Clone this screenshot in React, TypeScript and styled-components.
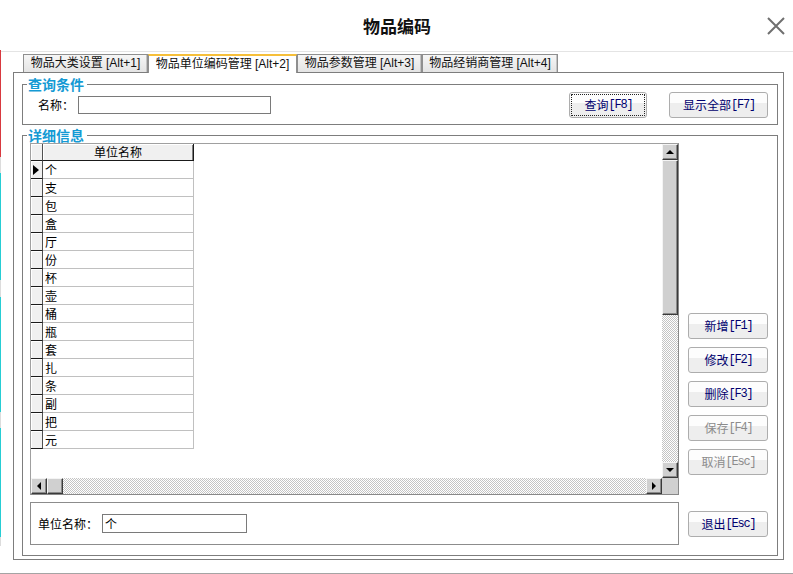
import * as React from 'react';
import styled, { createGlobalStyle } from 'styled-components';

const cjk = `"Noto Sans CJK SC", "Liberation Sans", sans-serif`;
const latin = `"Liberation Sans", "Noto Sans CJK SC", sans-serif`;
const frame = '#7d7d7d';

const GlobalStyle = createGlobalStyle`
  html, body { margin: 0; padding: 0; background: #fff; }
  body { font-family: ${cjk}; font-size: 12px; color: #000; }
  * { box-sizing: border-box; }
`;

const Screen = styled.div`
  display: flex;
  width: 793px;
  height: 574px;
  overflow: hidden;
  border-bottom: 1px solid #a4a4a4;
`;

const EdgeStrip = styled.div`
  flex: none;
  width: 1px;
  background: linear-gradient(
    to bottom,
    #fff 0 50px,
    #d8393f 50px 157px,
    #dcdcdc 157px 173px,
    #26cdd4 173px 280px,
    #dcdcdc 280px 297px,
    #26cdd4 297px 412px,
    #dcdcdc 412px 428px,
    #26cdd4 428px 537px,
    #dcdcdc 537px 546px,
    #fff 546px
  );
`;

const Window = styled.div`
  flex: 1;
  display: flex;
  flex-direction: column;
`;

const TitleBar = styled.header`
  flex: none;
  height: 52px;
  border-bottom: 1px solid #e4e4e4;
  display: grid;
  grid-template-columns: 1fr auto 1fr;
  align-items: center;
  padding: 0 8px;
`;

const Title = styled.h1`
  grid-column: 2;
  margin: 0;
  font: bold 17px/20px ${cjk};
  color: #111;
`;

const CloseButton = styled.button`
  grid-column: 3;
  justify-self: end;
  width: 18px;
  height: 18px;
  padding: 0;
  border: 0;
  background: none;
  display: flex;
`;

const TabStrip = styled.nav`
  flex: none;
  height: 20px;
  display: flex;
  align-items: flex-end;
  padding-left: 22px;
  position: relative;
  z-index: 1;
`;

const Tab = styled.div<{ $w: number; $active?: boolean }>`
  width: ${(p) => p.$w}px;
  height: ${(p) => (p.$active ? 19 : 18)}px;
  margin-bottom: ${(p) => (p.$active ? -1 : 0)}px;
  border: 1px solid #8f8f8f;
  border-bottom: 0;
  border-top: ${(p) => (p.$active ? '2px solid #f6bf3a' : '1px solid #8f8f8f')};
  background: ${(p) =>
    p.$active ? '#fff' : 'linear-gradient(#f6f6f6, #e4e4e4)'};
  box-shadow: ${(p) => (p.$active ? 'none' : 'inset -1px 0 #c4c4c4')};
  font: 12px/16px ${latin};
  color: #111;
  text-align: center;
  white-space: nowrap;
`;

const TabPanel = styled.section`
  margin-left: 12px;
  width: 771px;
  height: 488px;
  border: 1px solid ${frame};
  padding: 4px 5px 3px 8px;
  display: flex;
  flex-direction: column;
  gap: 3px;
`;

const Group = styled.fieldset`
  margin: 0;
  padding: 0;
  min-inline-size: 0;
  border: 1px solid ${frame};
`;

const GroupTitle = styled.legend`
  margin-left: 4px;
  padding: 0 3px 0 1px;
  font: bold 14px/15px ${cjk};
  color: #149ad4;
`;

const QueryRow = styled.div`
  display: flex;
  align-items: center;
  height: 32px;
  padding: 0 9px 6px 15px;
`;

const Label = styled.label<{ $w: number }>`
  width: ${(p) => p.$w}px;
  flex: none;
  font: 12px/16px ${cjk};
  white-space: nowrap;
`;

const TextBox = styled.input<{ $w: number; $h: number }>`
  width: ${(p) => p.$w}px;
  height: ${(p) => p.$h}px;
  border: 1px solid #7a7a7a;
  padding: 0 2px;
  font: 12px/16px ${cjk};
  color: #000;
  background: #fff;
  outline: none;
`;

const Spacer = styled.div<{ $w?: number }>`
  flex: ${(p) => (p.$w ? 'none' : '1')};
  width: ${(p) => (p.$w ? `${p.$w}px` : 'auto')};
`;

const ActionButton = styled.button<{ $w: number; $focused?: boolean }>`
  width: ${(p) => p.$w}px;
  height: 26px;
  flex: none;
  padding: 0;
  border: 1px solid #adadad;
  border-radius: 3px;
  background: linear-gradient(#fdfdfd 0 42%, #eeeeee 42% 100%);
  color: #00006e;
  font: 12px/16px ${cjk};
  display: flex;
  align-items: center;
  justify-content: center;
  outline: ${(p) => (p.$focused ? '1px dotted #222' : 'none')};
  outline-offset: -3px;
  &:disabled {
    color: #8c8c8c;
  }
`;

const Key = styled.span`
  font-family: "Liberation Mono", monospace;
  font-size: 12px;
  letter-spacing: -1.2px;
  margin-right: -1px;
`;

const DetailBody = styled.div`
  display: grid;
  grid-template-columns: 1fr 80px;
  grid-template-rows: 352px 43px;
  column-gap: 9px;
  row-gap: 7px;
  padding: 0 9px 10px 7px;
`;

const DataGrid = styled.div`
  border: 1px solid #888;
  border-top-color: #a0a0a0;
  border-left-color: #a0a0a0;
  display: grid;
  grid-template-columns: 1fr 16px;
  grid-template-rows: 1fr 16px;
  min-width: 0;
`;

const TableArea = styled.div`
  background: #fff;
  overflow: hidden;
`;

const GridRow = styled.div<{ $head?: boolean }>`
  display: flex;
  height: ${(p) => (p.$head ? 17 : 18)}px;
`;

const Indicator = styled.div`
  width: 12px;
  flex: none;
  background: #f0f0f0;
  border-right: 1px solid #505050;
  border-bottom: 1px solid #1a1a1a;
  box-shadow: inset 1px 1px #fff;
  display: flex;
  align-items: center;
  padding-left: 2px;
`;

const Pointer = styled.span`
  width: 0;
  height: 0;
  border-left: 6px solid #000;
  border-top: 5px solid transparent;
  border-bottom: 5px solid transparent;
`;

const HeadCell = styled.div`
  width: 151px;
  flex: none;
  background: #f0f0f0;
  border-right: 1px solid #1a1a1a;
  border-bottom: 1px solid #1a1a1a;
  box-shadow: inset 1px 1px #fff, inset -1px 0 #808080;
  font: 12px/16px ${cjk};
  text-align: center;
`;

const Cell = styled.div`
  width: 151px;
  flex: none;
  border-right: 1px solid #c0c0c0;
  border-bottom: 1px solid #c0c0c0;
  padding-left: 2px;
  font: 12px/17px ${cjk};
  color: #000;
`;

const ScrollBar = styled.div<{ $vertical?: boolean }>`
  display: flex;
  flex-direction: ${(p) => (p.$vertical ? 'column' : 'row')};
  min-width: 0;
  min-height: 0;
`;

const ScrollTrack = styled.div`
  flex: 1;
  background-color: #fff;
  background-image: repeating-conic-gradient(#c4c4c4 0 25%, #fff 0 50%);
  background-size: 2px 2px;
`;

const raised = `
  background: #d0d0d0;
  border: 1px solid;
  border-color: #f4f4f4 #3a3a3a #3a3a3a #f4f4f4;
  box-shadow: inset -1px -1px #8a8a8a;
`;

const ArrowBox = styled.div`
  width: 16px;
  height: 16px;
  flex: none;
  ${raised}
  display: flex;
  align-items: center;
  justify-content: center;
`;

const Thumb = styled.div<{ $len: number; $vertical?: boolean }>`
  flex: none;
  ${(p) => (p.$vertical ? `height: ${p.$len}px;` : `width: ${p.$len}px;`)}
  ${raised}
`;

const Arrow = styled.span<{ $dir: 'up' | 'down' | 'left' | 'right' }>`
  width: 0;
  height: 0;
  border: 4px solid transparent;
  ${(p) =>
    p.$dir === 'up'
      ? 'border-bottom-color: #000; border-top-width: 0; margin-top: -1px;'
      : p.$dir === 'down'
      ? 'border-top-color: #000; border-bottom-width: 0;'
      : p.$dir === 'left'
      ? 'border-right-color: #000; border-left-width: 0;'
      : 'border-left-color: #000; border-right-width: 0;'}
`;

const Corner = styled.div`
  background: #d0d0d0;
`;

const ButtonStack = styled.div<{ $end?: boolean }>`
  display: flex;
  flex-direction: column;
  justify-content: ${(p) => (p.$end ? 'flex-end' : 'center')};
  gap: 8px;
  padding-bottom: ${(p) => (p.$end ? 20 : 0)}px;
`;

const EditPanel = styled.div`
  border: 1px solid #8c8c8c;
  display: flex;
  align-items: center;
  padding-left: 7px;
  min-width: 0;
`;

const tabs = [
  { label: '物品大类设置 [Alt+1]', w: 125 },
  { label: '物品单位编码管理 [Alt+2]', w: 149, active: true },
  { label: '物品参数管理 [Alt+3]', w: 125 },
  { label: '物品经销商管理 [Alt+4]', w: 136 },
];

const units = ['个', '支', '包', '盒', '厅', '份', '杯', '壶', '桶', '瓶', '套', '扎', '条', '副', '把', '元'];

const sideActions = [
  { text: '新增', key: '[F1]' },
  { text: '修改', key: '[F2]' },
  { text: '删除', key: '[F3]' },
  { text: '保存', key: '[F4]', disabled: true },
  { text: '取消', key: '[Esc]', disabled: true },
];

const App = (): React.ReactElement => {
  const [name, setName] = React.useState('');
  const [unitName, setUnitName] = React.useState('个');

  return (
    <>
      <GlobalStyle />
      <Screen>
        <EdgeStrip />
        <Window>
          <TitleBar>
            <Title>物品编码</Title>
            <CloseButton aria-label="关闭">
              <svg width="18" height="18" viewBox="0 0 18 18">
                <path d="M1 1L17 17M17 1L1 17" stroke="#6f6f6f" strokeWidth="2" />
              </svg>
            </CloseButton>
          </TitleBar>

          <TabStrip>
            {tabs.map((t) => (
              <Tab key={t.label} $w={t.w} $active={t.active}>
                {t.label}
              </Tab>
            ))}
          </TabStrip>

          <TabPanel>
            <Group>
              <GroupTitle>查询条件</GroupTitle>
              <QueryRow>
                <Label htmlFor="name-input" $w={40}>名称：</Label>
                <TextBox
                  id="name-input"
                  $w={193}
                  $h={18}
                  value={name}
                  onChange={(e) => setName(e.target.value)}
                />
                <Spacer />
                <ActionButton $w={78} $focused>
                  查询<Key>[F8]</Key>
                </ActionButton>
                <Spacer $w={22} />
                <ActionButton $w={99}>
                  显示全部<Key>[F7]</Key>
                </ActionButton>
              </QueryRow>
            </Group>

            <Group>
              <GroupTitle>详细信息</GroupTitle>
              <DetailBody>
                <DataGrid>
                  <TableArea>
                    <GridRow $head>
                      <Indicator />
                      <HeadCell>单位名称</HeadCell>
                    </GridRow>
                    {units.map((u, i) => (
                      <GridRow key={u}>
                        <Indicator>{i === 0 && <Pointer />}</Indicator>
                        <Cell>{u}</Cell>
                      </GridRow>
                    ))}
                  </TableArea>
                  <ScrollBar $vertical>
                    <ArrowBox>
                      <Arrow $dir="up" />
                    </ArrowBox>
                    <Thumb $vertical $len={155} />
                    <ScrollTrack />
                    <ArrowBox>
                      <Arrow $dir="down" />
                    </ArrowBox>
                  </ScrollBar>
                  <ScrollBar>
                    <ArrowBox>
                      <Arrow $dir="left" />
                    </ArrowBox>
                    <Thumb $len={16} />
                    <ScrollTrack />
                    <ArrowBox>
                      <Arrow $dir="right" />
                    </ArrowBox>
                  </ScrollBar>
                  <Corner />
                </DataGrid>

                <ButtonStack $end>
                  {sideActions.map((a) => (
                    <ActionButton key={a.text} $w={80} disabled={a.disabled}>
                      {a.text}
                      <Key>{a.key}</Key>
                    </ActionButton>
                  ))}
                </ButtonStack>

                <EditPanel>
                  <Label htmlFor="unit-input" $w={64}>单位名称：</Label>
                  <TextBox
                    id="unit-input"
                    $w={145}
                    $h={19}
                    value={unitName}
                    onChange={(e) => setUnitName(e.target.value)}
                  />
                </EditPanel>

                <ButtonStack>
                  <ActionButton $w={80}>
                    退出<Key>[Esc]</Key>
                  </ActionButton>
                </ButtonStack>
              </DetailBody>
            </Group>
          </TabPanel>
        </Window>
      </Screen>
    </>
  );
};

export default App;
